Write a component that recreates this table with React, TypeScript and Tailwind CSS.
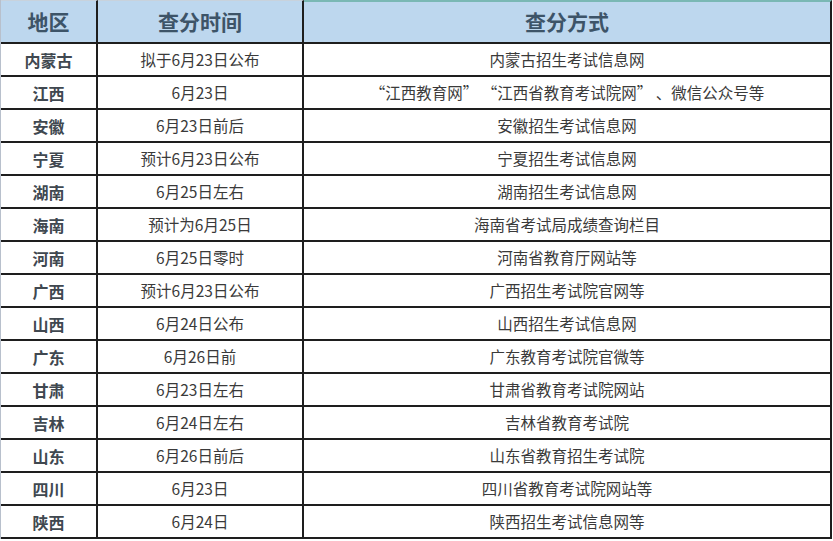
import React from "react";

const rows: [string, string, string][] = [
  ["内蒙古", "拟于6月23日公布", "内蒙古招生考试信息网"],
  ["江西", "6月23日", "“江西教育网” “江西省教育考试院网” 、微信公众号等"],
  ["安徽", "6月23日前后", "安徽招生考试信息网"],
  ["宁夏", "预计6月23日公布", "宁夏招生考试信息网"],
  ["湖南", "6月25日左右", "湖南招生考试信息网"],
  ["海南", "预计为6月25日", "海南省考试局成绩查询栏目"],
  ["河南", "6月25日零时", "河南省教育厅网站等"],
  ["广西", "预计6月23日公布", "广西招生考试院官网等"],
  ["山西", "6月24日公布", "山西招生考试信息网"],
  ["广东", "6月26日前", "广东教育考试院官微等"],
  ["甘肃", "6月23日左右", "甘肃省教育考试院网站"],
  ["吉林", "6月24日左右", "吉林省教育考试院"],
  ["山东", "6月26日前后", "山东省教育招生考试院"],
  ["四川", "6月23日", "四川省教育考试院网站等"],
  ["陕西", "6月24日", "陕西招生考试信息网等"],
];

export default function App() {
  return (
    <div
      className="w-[833px] h-[541px] bg-white overflow-hidden"
      style={{ fontFamily: '"Noto Sans CJK SC", "Noto Sans", sans-serif' }}
    >
      <div className="w-[832px] border-l border-[#b8c0cc]">
        <div className="flex h-[44px] bg-[#bdd7ee] border-b-2 border-[#1e1e1e] text-[21px] font-bold text-[#3d5468]">
          <div className="w-[97px] shrink-0 border-r-2 border-[#1e1e1e] border-t border-t-[#c8d2dc] flex items-center justify-center">
            地区
          </div>
          <div className="w-[206px] shrink-0 border-r-2 border-[#1e1e1e] border-t border-t-[#c8d2dc] flex items-center justify-center">
            查分时间
          </div>
          <div className="flex-1 border-r-2 border-[#1e1e1e] border-t-2 border-t-[#7ab8b4] flex items-center justify-center">
            查分方式
          </div>
        </div>
        {rows.map((r, i) => (
          <div key={i} className="flex h-[33px] border-b-2 border-[#1e1e1e] text-[#3a3a3a]">
            <div className="w-[97px] shrink-0 border-r-2 border-[#1e1e1e] flex items-center justify-center text-[16px] font-bold text-[#404850]">
              {r[0]}
            </div>
            <div className="w-[206px] shrink-0 border-r-2 border-[#1e1e1e] flex items-center justify-center text-[15.5px]">
              {r[1]}
            </div>
            <div className="flex-1 border-r-2 border-[#1e1e1e] flex items-center justify-center text-[15.5px] whitespace-pre">
              {r[2]}
            </div>
          </div>
        ))}
      </div>
    </div>
  );
}
